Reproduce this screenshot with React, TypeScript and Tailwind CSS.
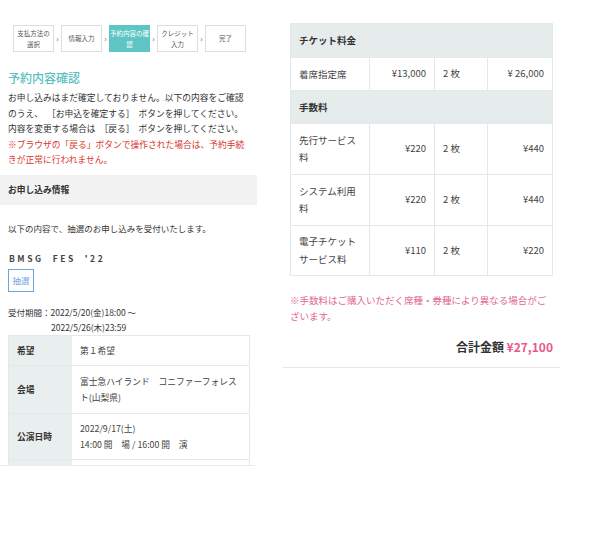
import React from "react";

const font = { fontFamily: '"Noto Sans CJK JP", "Noto Sans", sans-serif' };

function Steps() {
  const steps = [
    { t: ["支払方法の", "選択"], active: false },
    { t: ["情報入力"], active: false },
    { t: ["予約内容の確", "認"], active: true },
    { t: ["クレジット", "入力"], active: false },
    { t: ["完了"], active: false },
  ];
  return (
    <div className="flex items-center pl-[13px] pt-[25px]">
      {steps.map((s, i) => (
        <React.Fragment key={i}>
          <div
            className={
              "flex h-[27px] w-[41px] flex-col items-center justify-center text-[6.5px] leading-[11px] " +
              (s.active
                ? "bg-[#5ec5c5] text-white border border-[#5ec5c5]"
                : "bg-white text-[#555] border border-[#dedede]")
            }
          >
            {s.t.map((l, j) => (
              <span key={j}>{l}</span>
            ))}
          </div>
          {i < steps.length - 1 && (
            <div className="flex w-[7px] justify-center text-[8px] leading-none text-[#555]">›</div>
          )}
        </React.Fragment>
      ))}
    </div>
  );
}

function LeftPanel() {
  const rows = [
    { k: "希望", v: ["第１希望"], h: "h-[30px]" },
    { k: "会場", v: ["富士急ハイランド　コニファーフォレス", "ト(山梨県)"], h: "h-[48px]" },
    { k: "公演日時", v: ["2022/9/17(土)", "14:00 開　場 / 16:00 開　演"], h: "h-[46px]" },
    { k: "", v: [""], h: "h-[40px]" },
  ];
  return (
    <div className="h-[466px] w-[257px] shrink-0 overflow-hidden border-b border-[#ececec]">
      <Steps />
      <div className="px-[8px] pt-[18px]">
        <div className="text-[12px] leading-[16px] font-medium text-[#5bbfbf]">予約内容確認</div>
        <div className="mt-[4px] text-[8.75px] leading-[15.5px] text-[#333]">
          <div>お申し込みはまだ確定しておりません。以下の内容をご確認</div>
          <div>
            のうえ、<span className="ml-[4px]">［</span>お申込を確定する<span className="mr-[4px]">］</span>ボタンを押してください。
          </div>
          <div>
            内容を変更する場合は<span className="ml-[4px]">［</span>戻る<span className="mr-[4px]">］</span>ボタンを押してください。
          </div>
          <div className="text-[#d8352c]">※ブラウザの「戻る」ボタンで操作された場合は、予約手続</div>
          <div className="text-[#d8352c]">きが正常に行われません。</div>
        </div>
      </div>
      <div className="mt-[7px] flex h-[30px] items-center bg-[#f2f2f2] px-[8px] text-[8.75px] font-bold text-[#333]">
        お申し込み情報
      </div>
      <div className="px-[8px]">
        <div className="mt-[16px] text-[8.5px] leading-[14px] text-[#333]">
          以下の内容で、抽選のお申し込みを受付いたします。
        </div>
        <div className="mt-[16px] flex gap-[9px] pl-[1px] text-[8.5px] leading-[14px] font-bold tracking-[0.3em] text-[#444]">
          <span>BMSG</span>
          <span>FES</span>
          <span>&#39;22</span>
        </div>
        <div className="mt-[4px] flex h-[23px] w-[26px] items-center justify-center border-[1.5px] border-[#6aa6dc] text-[8.5px] text-[#6aa6dc]">
          抽選
        </div>
        <div className="mt-[13px] text-[8.5px] leading-[15px] text-[#333]">
          <div>受付期間：2022/5/20(金)18:00 ～</div>
          <div className="pl-[43px]">2022/5/26(木)23:59</div>
        </div>
        <div className="mt-[0.5px] w-[242px] border border-[#e3e8e8]">
          {rows.map((r, i) => (
            <div key={i} className={"flex border-b border-[#e3e8e8] " + r.h}>
              <div className="flex w-[63px] shrink-0 items-center bg-[#e9eeee] pl-[8px] text-[8.75px] font-bold text-[#333]">
                {r.k}
              </div>
              <div className="flex flex-col justify-center pl-[8px] text-[8.75px] leading-[16px] text-[#444]">
                {r.v.map((l, j) => (
                  <span key={j}>{l}</span>
                ))}
              </div>
            </div>
          ))}
        </div>
      </div>
    </div>
  );
}

function RightPanel() {
  const fees = [
    { n: ["先行サービス", "料"], p: "¥220", q: "2 枚", t: "¥440" },
    { n: ["システム利用", "料"], p: "¥220", q: "2 枚", t: "¥440" },
    { n: ["電子チケット", "サービス料"], p: "¥110", q: "2 枚", t: "¥220" },
  ];
  const cell = "flex items-center border-l border-[#e3e8e8] text-[9.5px] leading-[17.5px] text-[#444]";
  return (
    <div className="ml-[26px] w-[277px] shrink-0">
      <div className="mx-[7px] mt-[23px] border border-[#e3e8e8]">
        <div className="flex h-[33px] items-center bg-[#e6ecec] pl-[8px] text-[9.5px] font-bold text-[#333]">
          チケット料金
        </div>
        <div className="flex h-[33px] border-t border-[#e3e8e8]">
          <div className="flex w-[78px] items-center pl-[8px] text-[9.5px] text-[#444]">着席指定席</div>
          <div className={cell + " w-[65px] justify-end pr-[8px]"}>¥13,000</div>
          <div className={cell + " w-[53px] pl-[8px]"}>2 枚</div>
          <div className={cell + " flex-1 justify-end pr-[8px]"}>¥ 26,000</div>
        </div>
        <div className="flex h-[33px] items-center border-t border-[#e3e8e8] bg-[#e6ecec] pl-[8px] text-[9.5px] font-bold text-[#333]">
          手数料
        </div>
        {fees.map((f, i) => (
          <div key={i} className={"flex border-t border-[#e3e8e8] " + (i === 2 ? "h-[50px]" : "h-[51px]")}>
            <div className="flex w-[78px] flex-col justify-center pl-[8px] text-[9.5px] leading-[17.5px] text-[#444]">
              {f.n.map((l, j) => (
                <span key={j}>{l}</span>
              ))}
            </div>
            <div className={cell + " w-[65px] justify-end pr-[8px]"}>{f.p}</div>
            <div className={cell + " w-[53px] pl-[8px]"}>{f.q}</div>
            <div className={cell + " flex-1 justify-end pr-[8px]"}>{f.t}</div>
          </div>
        ))}
      </div>
      <div className="mx-[7px] mt-[16px] text-[9.5px] leading-[16px] text-[#e2688f]">
        ※手数料はご購入いただく席種・券種により異なる場合がご
        <br />
        ざいます。
      </div>
      <div className="mx-[7px] mt-[15px] text-right text-[12px] leading-[16px] font-bold text-[#333]">
        合計金額 <span className="text-[#e8588a]">¥27,100</span>
      </div>
      <div className="mt-[12px] border-b border-[#e8e8e8]" />
    </div>
  );
}

export default function App() {
  return (
    <div className="h-[540px] w-[590px] bg-white [text-spacing-trim:space-all]" style={font}>
      <div className="flex items-start">
        <LeftPanel />
        <RightPanel />
      </div>
    </div>
  );
}
